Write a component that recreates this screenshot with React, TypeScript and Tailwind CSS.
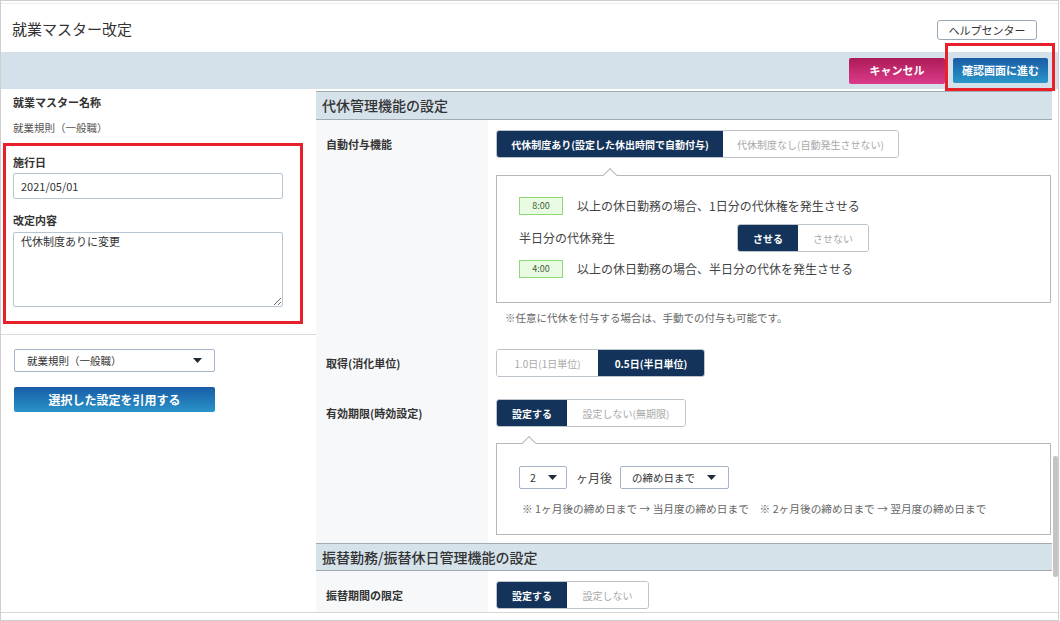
import React from 'react';

type SegItem = { label: string; w: number; on?: boolean };

const Caret = () => (
  <svg width="9" height="5" viewBox="0 0 9 5" className="shrink-0">
    <path d="M0 0h9L4.5 5z" fill="#1f2a36" />
  </svg>
);

// segmented toggle (dark navy = selected)
const Segmented = ({ items }: { items: SegItem[] }) => (
  <div className="flex h-[28px] w-max overflow-hidden rounded-[3px] border border-[#bcc3ca]">
    {items.map((it) => (
      <div
        key={it.label}
        style={{ width: it.w }}
        className={`flex items-center justify-center text-[10px] whitespace-nowrap ${
          it.on ? 'bg-[#13335a] font-bold text-white' : 'bg-white text-[#a9a9a9]'
        }`}
      >
        {it.label}
      </div>
    ))}
  </div>
);

const SectionHeader = ({ title, h = 'h-[29px]' }: { title: string; h?: string }) => (
  <div className={`flex ${h} items-center border-t border-b border-[#a3abb2] bg-[#d6e2ea] pl-[6px] text-[14px] font-medium text-[#333]`}>
    {title}
  </div>
);

const Row = ({ label, pt, children, className = '' }: { label: string; pt: string; children: React.ReactNode; className?: string }) => (
  <div className="flex">
    <div className={`w-[172px] shrink-0 bg-[#f7f8fa] pl-[10px] ${pt}`}>
      <div className="text-[11px] leading-[28px] font-bold text-[#333]">{label}</div>
    </div>
    <div className={`flex-1 pl-[8px] pr-[1px] ${pt} ${className}`}>{children}</div>
  </div>
);

const GreenBox = ({ v }: { v: string }) => (
  <div className="flex h-[18px] w-[44px] items-center justify-center border border-[#8fd87a] bg-[#eafbe4] text-[9px] text-[#3f5f36]">
    {v}
  </div>
);

const Pointer = ({ left }: { left: number }) => (
  <div
    style={{ left }}
    className="absolute top-[-6px] h-[10px] w-[10px] rotate-45 border-t border-l border-[#b3b8bd] bg-white"
  />
);

const SelectBox = ({ text, w, pl, gap }: { text: string; w: string; pl: string; gap: string }) => (
  <div className={`flex h-[23px] items-center rounded-[2px] border border-[#a3b5c6] bg-white ${w} ${pl} ${gap} text-[10.5px] text-[#333]`}>
    <span className="flex-1 whitespace-nowrap">{text}</span>
    <Caret />
  </div>
);

export default function App() {
  return (
    <div className="relative h-[621px] w-[1059px] overflow-hidden border border-[#cfcfcf] bg-white font-['Noto_Sans_CJK_JP','Noto_Sans',sans-serif] text-[#333]">
      <div className="h-px bg-[#ececec] mt-[2px]" />
      {/* header */}
      <div className="flex h-[48px] justify-between pl-[11px] pr-[21px]">
        <div className="pt-[14px] text-[15px] leading-[22px] text-[#333]">就業マスター改定</div>
        <div className="mt-[16px] flex h-[20px] w-[100px] items-center justify-center rounded-[3px] border border-[#9aa8b5] text-[11px] text-[#333]">
          ヘルプセンター
        </div>
      </div>

      {/* toolbar */}
      <div className="flex h-[37px] items-center justify-end gap-[8px] bg-[#d5e1ea] pr-[10px]">
        <div className="flex h-[26px] w-[96px] items-center justify-center rounded-[2px] bg-gradient-to-b from-[#ad1957] to-[#dc3b8b] text-[11px] font-bold text-white">
          キャンセル
        </div>
        <div className="flex h-[25px] w-[95px] items-center justify-center rounded-[2px] bg-gradient-to-b from-[#1a5ba5] to-[#2b97ca] text-[11px] font-bold text-white">
          確認画面に進む
        </div>
      </div>

      {/* main */}
      <div className="flex h-[523px]">
        {/* left panel */}
        <div className="w-[315px] shrink-0">
          <div className="border-b border-[#dcdcdc] pb-[27px] pl-[12px]">
            <div className="mt-[6px] text-[11px] leading-[14px] font-bold">就業マスター名称</div>
            <div className="mt-[12px] text-[10.5px] leading-[14px] text-[#555]">就業規則（一般職）</div>
            <div className="mt-[20px] text-[11px] leading-[14px] font-bold">施行日</div>
            <div className="mt-[4px] flex h-[26px] w-[270px] items-center rounded-[2px] border border-[#b7c5d2] pl-[7px] text-[11px]">
              2021/05/01
            </div>
            <div className="mt-[14px] text-[11px] leading-[14px] font-bold">改定内容</div>
            <textarea
              readOnly
              defaultValue="代休制度ありに変更"
              className="mt-[5px] block h-[75px] w-[270px] rounded-[2px] border border-[#b7c5d2] px-[7px] pt-[1px] text-[11px] leading-[15px] outline-none"
            />
          </div>
          <div className="pl-[13px]">
            <div className="mt-[14px]">
              <SelectBox text="就業規則（一般職）" w="w-[201px]" pl="pl-[12px]" gap="pr-[12px]" />
            </div>
            <div className="mt-[15px] flex h-[25px] w-[201px] items-center justify-center rounded-[2px] bg-gradient-to-b from-[#1a5ca6] to-[#2a94c9] text-[12px] font-bold text-white">
              選択した設定を引用する
            </div>
          </div>
        </div>

        {/* right content */}
        <div className="w-[736px] shrink-0 overflow-hidden pt-[2px]">
          <SectionHeader title="代休管理機能の設定" />
          <Row label="自動付与機能" pt="pt-[10px]" className="pb-[13px]">
            <Segmented
              items={[
                { label: '代休制度あり(設定した休出時間で自動付与)', w: 226, on: true },
                { label: '代休制度なし(自動発生させない)', w: 175 },
              ]}
            />
            <div className="relative mt-[17px] h-[128px] border border-[#b3b8bd] bg-white pl-[22px] pt-[21px]">
              <Pointer left={108} />
              <div className="flex items-center gap-[14px]">
                <GreenBox v="8:00" />
                <span className="text-[12px] text-[#444]">以上の休日勤務の場合、1日分の代休権を発生させる</span>
              </div>
              <div className="mt-[9px] flex items-center">
                <span className="w-[218px] text-[12px] text-[#444]">半日分の代休発生</span>
                <Segmented
                  items={[
                    { label: 'させる', w: 60, on: true },
                    { label: 'させない', w: 70 },
                  ]}
                />
              </div>
              <div className="mt-[8px] flex items-center gap-[14px]">
                <GreenBox v="4:00" />
                <span className="text-[12px] text-[#444]">以上の休日勤務の場合、半日分の代休を発生させる</span>
              </div>
            </div>
            <div className="mt-[8px] ml-[9px] text-[10.5px] leading-[14px] text-[#666]">
              ※任意に代休を付与する場合は、手動での付与も可能です。
            </div>
          </Row>
          <Row label="取得(消化単位)" pt="pt-[11px]" className="pb-[10px]">
            <Segmented
              items={[
                { label: '1.0日(1日単位)', w: 101 },
                { label: '0.5日(半日単位)', w: 106, on: true },
              ]}
            />
          </Row>
          <Row label="有効期限(時効設定)" pt="pt-[12px]" className="pb-[8px]">
            <Segmented
              items={[
                { label: '設定する', w: 70, on: true },
                { label: '設定しない(無期限)', w: 118 },
              ]}
            />
            <div className="relative mt-[16px] h-[92px] border border-[#b3b8bd] bg-white pl-[22px] pt-[22px]">
              <Pointer left={27} />
              <div className="flex items-center">
                <SelectBox text="2" w="w-[48px]" pl="pl-[10px]" gap="pr-[9px]" />
                <span className="ml-[9px] mr-[8px] text-[12px] text-[#444]">ヶ月後</span>
                <SelectBox text="の締め日まで" w="w-[109px]" pl="pl-[11px]" gap="pr-[12px]" />
              </div>
              <div className="mt-[13px] ml-[3px] text-[10.7px] leading-[14px] text-[#666]">
                ※ 1ヶ月後の締め日まで → 当月度の締め日まで　※ 2ヶ月後の締め日まで → 翌月度の締め日まで
              </div>
            </div>
          </Row>
          <SectionHeader title="振替勤務/振替休日管理機能の設定" h="h-[28px]" />
          <Row label="振替期間の限定" pt="pt-[10px]" className="pb-[10px]">
            <Segmented
              items={[
                { label: '設定する', w: 70, on: true },
                { label: '設定しない', w: 81 },
              ]}
            />
          </Row>
        </div>

        {/* scrollbar */}
        <div className="w-[6px] shrink-0 pl-[1px]">
          <div className="mt-[367px] h-[121px] w-[5px] rounded-[2px] bg-[#c4c4c4]" />
        </div>
      </div>
      <div className="h-[7px] border-t border-[#d8d8d8]" />

      {/* annotation frames */}
      <div className="pointer-events-none absolute left-[2px] top-[142px] h-[181px] w-[300px] border-[3px] border-[#e8202a]" />
      <div className="pointer-events-none absolute left-[944px] top-[42px] h-[48px] w-[110px] border-[3px] border-[#e8202a]" />
    </div>
  );
}
